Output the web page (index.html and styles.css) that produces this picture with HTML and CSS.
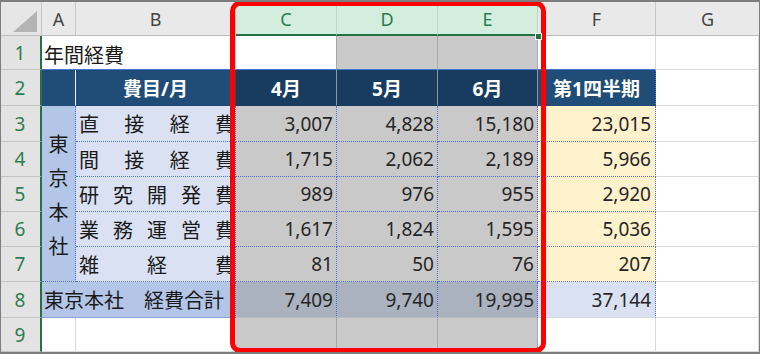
FILE: index.html
```html
<!DOCTYPE html>
<html lang="ja">
<head>
<meta charset="utf-8">
<link rel="stylesheet" href="styles.css">
</head>
<body>
<div class="frame">
  <div class="sheet">
    <div class="corner"><span class="tri"></span></div>
    <div class="hd">A</div>
    <div class="hd">B</div>
    <div class="hd sel">C</div>
    <div class="hd sel">D</div>
    <div class="hd sel">E</div>
    <div class="hd">F</div>
    <div class="hd hd-last">G</div>

    <div class="rh">1</div>
    <div class="c title span2 r1">年間経費</div>
    <div class="c r1 sbord"></div>
    <div class="c r1 sg sbord"></div>
    <div class="c r1 sg sbord"></div>
    <div class="c r1"></div>
    <div class="c"></div>

    <div class="rh">2</div>
    <div class="c nv nv-a"></div>
    <div class="c nv">費目/月</div>
    <div class="c nv nvs">4月</div>
    <div class="c nv nvs">5月</div>
    <div class="c nv nvs">6月</div>
    <div class="c nv nv-f">第1四半期</div>
    <div class="c"></div>

    <div class="rh">3</div>
    <div class="c grp"><span>東</span><span>京</span><span>本</span><span>社</span></div>
    <div class="c item"><span>直</span><span>接</span><span>経</span><span>費</span></div>
    <div class="c num sd">3,007</div>
    <div class="c num sd">4,828</div>
    <div class="c num sd">15,180</div>
    <div class="c num yel">23,015</div>
    <div class="c"></div>

    <div class="rh">4</div>
    <div class="c item"><span>間</span><span>接</span><span>経</span><span>費</span></div>
    <div class="c num sd">1,715</div>
    <div class="c num sd">2,062</div>
    <div class="c num sd">2,189</div>
    <div class="c num yel">5,966</div>
    <div class="c"></div>

    <div class="rh">5</div>
    <div class="c item"><span>研</span><span>究</span><span>開</span><span>発</span><span>費</span></div>
    <div class="c num sd">989</div>
    <div class="c num sd">976</div>
    <div class="c num sd">955</div>
    <div class="c num yel">2,920</div>
    <div class="c"></div>

    <div class="rh">6</div>
    <div class="c item"><span>業</span><span>務</span><span>運</span><span>営</span><span>費</span></div>
    <div class="c num sd">1,617</div>
    <div class="c num sd">1,824</div>
    <div class="c num sd">1,595</div>
    <div class="c num yel">5,036</div>
    <div class="c"></div>

    <div class="rh">7</div>
    <div class="c item"><span>雑</span><span>経</span><span>費</span></div>
    <div class="c num sd">81</div>
    <div class="c num sd">50</div>
    <div class="c num sd">76</div>
    <div class="c num yel">207</div>
    <div class="c"></div>

    <div class="rh">8</div>
    <div class="c total span2">東京本社　経費合計</div>
    <div class="c num st">7,409</div>
    <div class="c num st">9,740</div>
    <div class="c num st">19,995</div>
    <div class="c num tot">37,144</div>
    <div class="c"></div>

    <div class="rh">9</div>
    <div class="c"></div>
    <div class="c"></div>
    <div class="c sg sbord"></div>
    <div class="c sg sbord"></div>
    <div class="c sg sbord"></div>
    <div class="c"></div>
    <div class="c"></div>
  </div>
  <div class="redbox"></div>
  <div class="handle"></div>
</div>
</body>
</html>
```

FILE: styles.css
```css
body {
  margin: 0;
  background: #ffffff;
}

.frame {
  position: relative;
  width: 760px;
  height: 354px;
  box-sizing: border-box;
  border: 1px solid #7d7d7d;
  border-top-width: 2px;
  border-bottom-width: 2px;
  background: #ffffff;
  overflow: hidden;
}

.sheet {
  display: grid;
  grid-template-columns: 41px 34px 160px 101px 101px 100px 118px 103px;
  grid-template-rows: 34px 34px 36px 36px 35px 35px 35px 35px 36px 34px;
  font-family: "Noto Sans", "Noto Sans CJK JP", sans-serif;
  font-size: 19px;
  color: #262626;
}

.sheet > div {
  box-sizing: border-box;
  display: flex;
  align-items: center;
  min-width: 0;
  overflow: hidden;
  white-space: nowrap;
}

/* column headers */
.corner {
  background: #e6e6e6;
  border-right: 1px solid #c6c6c6;
  border-bottom: 1px solid #bdbdbd;
  justify-content: flex-end;
  align-items: flex-end !important;
  padding: 0 4px 3px 0;
}

.tri {
  display: block;
  width: 24px;
  height: 21px;
  background: #b4b4b4;
  clip-path: polygon(100% 0, 100% 100%, 0 100%);
}

.hd {
  background: #e9e9e9;
  color: #444444;
  font-size: 18px;
  justify-content: center;
  border-right: 1px solid #c6c6c6;
  border-bottom: 1px solid #bdbdbd;
  padding-top: 1px;
}

.hd.sel {
  background: #d3eedd;
  color: #2a7a4e;
  border-right: 1px solid #bcd6c5;
  border-bottom: 2px solid #217346;
}

.hd-last {
  border-right: none;
}

/* row headers */
.rh {
  background: #e3e3e3;
  color: #2e7d52;
  font-size: 19px;
  justify-content: center;
  border-right: 2px solid #217346;
  border-bottom: 1px solid #c4c4c4;
  padding-right: 1px;
}

/* generic cell */
.c {
  background: #ffffff;
  border-right: 1px solid #dadada;
  border-bottom: 1px solid #dadada;
}

.span2 {
  grid-column: span 2;
}

.r1 {
  border-bottom: 1px solid #4a72d0;
}

.title {
  font-family: "Noto Sans CJK JP", sans-serif;
  font-size: 20px;
  color: #1a1a1a;
  padding: 3px 0 0 2px;
}

.sg {
  background: #c9c9c9;
}

.sbord {
  border-right: 1px solid #a8a8a8;
}

/* navy header row */
.nv {
  background: #1f4d78;
  color: #ffffff;
  font-family: "Noto Sans", "Noto Sans CJK JP", sans-serif;
  font-weight: bold;
  font-size: 19px;
  justify-content: center;
  border-right: 1px solid #1f4d78;
  border-bottom: 1px solid #1f4d78;
}

.nv-a {
  border-right: 1px solid #ffffff;
}

.nvs {
  background: #183c5f;
  border-right: 1px solid #8a97a4;
  border-bottom: 1px solid #183c5f;
}

.nv-f {
  border-right: 1px dotted #4a6fe0;
}

/* group label */
.grp {
  grid-row: span 5;
  background: #b4c6e7;
  flex-direction: column;
  justify-content: center;
  align-items: center !important;
  font-family: "Noto Sans CJK JP", sans-serif;
  font-size: 20px;
  line-height: 34px;
  color: #1a1a1a;
  border-right: 1px dotted #4a6fe0;
  border-bottom: 1px dotted #4a6fe0;
  padding-top: 2px;
}

.item {
  background: #d9e1f2;
  justify-content: space-between;
  font-family: "Noto Sans CJK JP", sans-serif;
  font-size: 20px;
  color: #1a1a1a;
  padding: 0 0 0 3px;
  border-right: 1px dotted #4a6fe0;
  border-bottom: 1px dotted #4a6fe0;
}

.num {
  justify-content: flex-end;
  padding-right: 3px;
  color: #262626;
}

.sd {
  background: #c9c9c9;
  border-right: 1px dotted #4a6fe0;
  border-bottom: 1px dotted #4a6fe0;
}

.yel {
  background: #fff2cc;
  border-right: 1px dotted #4a6fe0;
  border-bottom: 1px dotted #4a6fe0;
  padding-right: 4px;
}

.total {
  background: #b4c6e7;
  font-family: "Noto Sans CJK JP", sans-serif;
  font-size: 20px;
  color: #1a1a1a;
  padding-left: 2px;
  border-right: 1px dotted #4a6fe0;
  border-bottom: 1px solid #86a3de;
}

.st {
  background: #aab2c0;
  border-right: 1px dotted #4a6fe0;
  border-bottom: 1px solid #b9bcc2;
}

.tot {
  background: #d9e1f2;
  border-right: 1px dotted #4a6fe0;
  border-bottom: 1px solid #dadada;
  padding-right: 4px;
}

/* overlays */
.redbox {
  position: absolute;
  left: 229px;
  top: -1px;
  width: 316px;
  height: 352px;
  box-sizing: border-box;
  border: 5px solid #ff0000;
  border-radius: 10px;
}

.handle {
  position: absolute;
  left: 534px;
  top: 31px;
  width: 5px;
  height: 5px;
  background: #217346;
  border: 1px solid #ffffff;
}
```
